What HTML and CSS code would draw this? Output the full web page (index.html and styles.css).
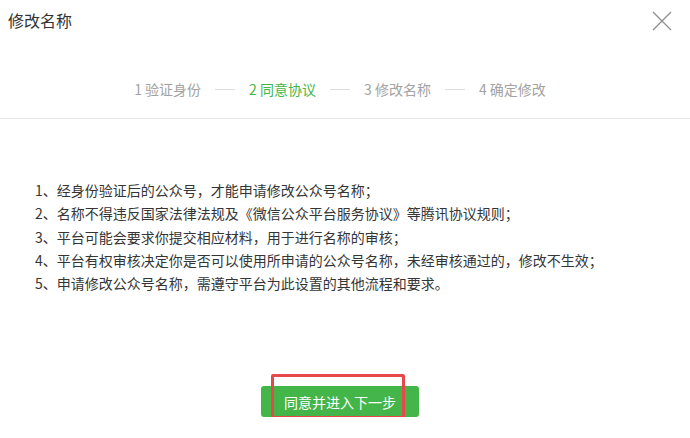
FILE: index.html
```html
<!DOCTYPE html>
<html lang="zh-CN">
<head>
    <meta charset="UTF-8">
    <meta name="viewport" content="width=device-width, initial-scale=1.0">
    <title>修改名称</title>
    <link rel="stylesheet" href="styles.css">
</head>
<body>

<div class="dialog">
    <div class="dialog-header">
        <h3 class="dialog-title">修改名称</h3>
        <button class="close-btn" aria-label="关闭">
            <svg width="20" height="20" viewBox="0 0 20 20">
                <path d="M1 1 L19 19 M19 1 L1 19" stroke="#8f8f8f" stroke-width="1.3" fill="none"/>
            </svg>
        </button>
    </div>

    <div class="steps">
        <span class="step">1 验证身份</span>
        <span class="step-line"></span>
        <span class="step current">2 同意协议</span>
        <span class="step-line"></span>
        <span class="step">3 修改名称</span>
        <span class="step-line"></span>
        <span class="step">4 确定修改</span>
    </div>

    <div class="dialog-body">
        <ul class="rules">
            <li>1、经身份验证后的公众号，才能申请修改公众号名称；</li>
            <li>2、名称不得违反国家法律法规及《微信公众平台服务协议》等腾讯协议规则；</li>
            <li>3、平台可能会要求你提交相应材料，用于进行名称的审核；</li>
            <li>4、平台有权审核决定你是否可以使用所申请的公众号名称，未经审核通过的，修改不生效；</li>
            <li>5、申请修改公众号名称，需遵守平台为此设置的其他流程和要求。</li>
        </ul>
    </div>

    <div class="dialog-footer">
        <span class="btn-wrap">
            <button class="btn-primary">同意并进入下一步</button>
            <span class="mark"></span>
        </span>
    </div>
</div>

</body>
</html>
```

FILE: styles.css
```css
:root {
    --green: #44b549;
    --text: #353535;
    --muted: #a3a3a3;
    --border: #e7e7eb;
    --mark: #e8484b;
}

body {
    margin: 0;
    background: #fff;
    font-family: "Noto Sans CJK SC", "Noto Sans", sans-serif;
    color: var(--text);
}

.dialog {
    width: 690px;
}

.dialog-header {
    height: 40px;
    display: flex;
    align-items: center;
    justify-content: space-between;
    padding: 0 18px 0 8px;
}

.dialog-title {
    margin: 0;
    font-size: 16px;
    font-weight: normal;
    line-height: 40px;
    color: #333;
}

.close-btn {
    border: none;
    background: none;
    padding: 0;
    width: 20px;
    height: 20px;
    margin-top: 2px;
    cursor: pointer;
}

.close-btn svg {
    display: block;
}

.steps {
    display: flex;
    justify-content: center;
    align-items: center;
    gap: 14px;
    padding: 37px 10px 17px 0;
    line-height: 24px;
    font-size: 14px;
    color: var(--muted);
    border-bottom: 1px solid var(--border);
}

.step.current {
    color: var(--green);
}

.step-line {
    width: 20px;
    height: 1px;
    background: #dcdcdc;
}

.dialog-body {
    padding: 60px 0 0 35px;
}

.rules {
    list-style: none;
    margin: 0;
    padding: 0;
    font-size: 14px;
    line-height: 23.3px;
}

.dialog-footer {
    display: flex;
    justify-content: center;
    padding: 91px 10px 0 0;
}

.btn-wrap {
    position: relative;
    display: inline-block;
}

.btn-primary {
    display: block;
    width: 158px;
    height: 31px;
    border: none;
    border-radius: 3px;
    background: var(--green);
    color: #fff;
    font-family: inherit;
    font-size: 14px;
    cursor: pointer;
}

/* red annotation box over the button */
.mark {
    position: absolute;
    left: 10px;
    top: -12px;
    width: 128px;
    height: 39px;
    border: 3px solid var(--mark);
    border-radius: 2px;
    pointer-events: none;
}
```
